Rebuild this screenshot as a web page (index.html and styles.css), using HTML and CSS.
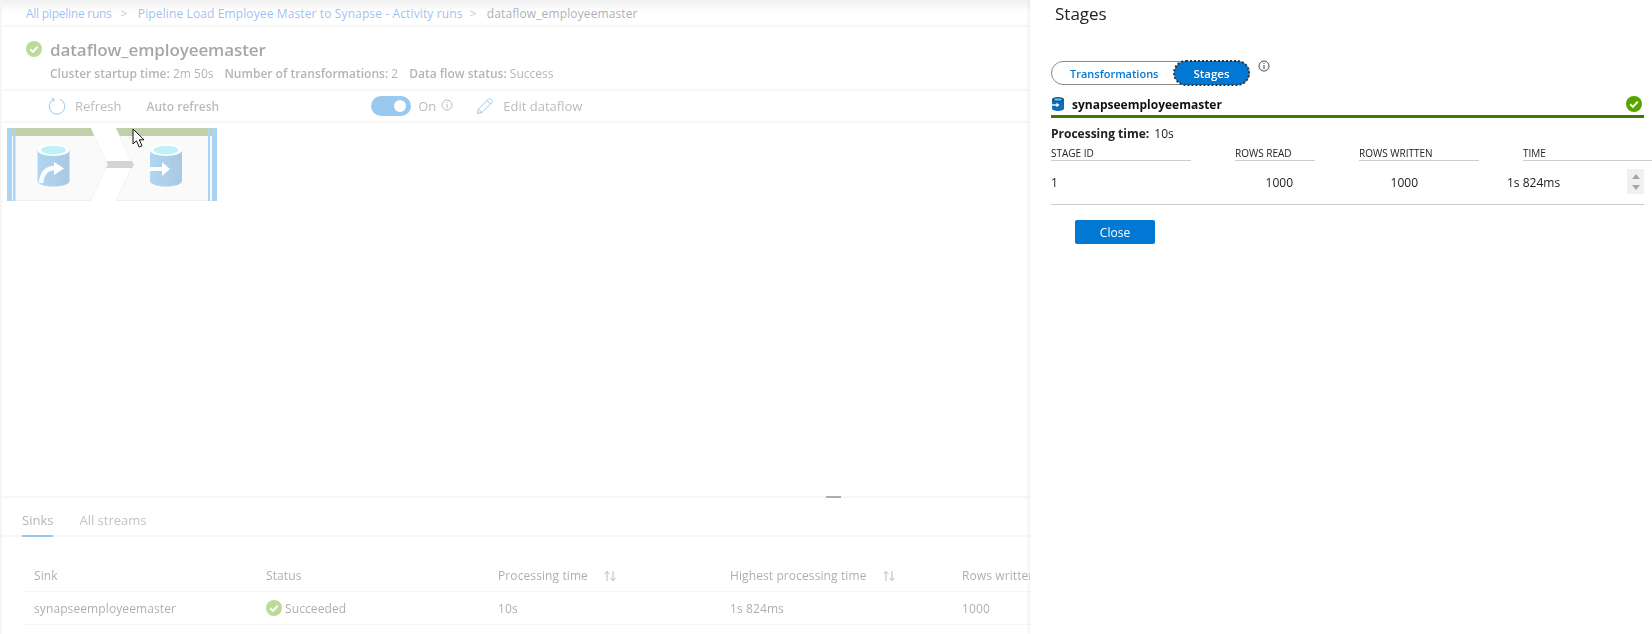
FILE: index.html
```html
<!DOCTYPE html>
<html lang="en">
<head>
    <meta charset="UTF-8">
    <meta name="viewport" content="width=device-width, initial-scale=1.0">
    <title>Stages</title>
    <link rel="stylesheet" href="styles.css">
</head>
<body>
<div class="page">
    <div class="main">
        <div class="faded">
            <div class="breadcrumb">
                <a class="crumb-first">All pipeline runs</a><span class="sep">&gt;</span>
                <a>Pipeline Load Employee Master to Synapse - Activity runs</a><span class="sep">&gt;</span>
                <span>dataflow_employeemaster</span>
            </div>
            <div class="summary">
                <div class="summary-title">
                    <svg class="check-big" viewBox="0 0 16 16"><circle cx="8" cy="8" r="8" fill="#57a300"/><path d="M4.2 8.2l2.7 2.7 4.9-5.3" fill="none" stroke="#fff" stroke-width="2"/></svg>
                    <h1>dataflow_employeemaster</h1>
                </div>
                <div class="summary-meta">
                    <span><b>Cluster startup time:</b> 2m 50s</span>
                    <span><b>Number of transformations:</b> 2</span>
                    <span><b>Data flow status:</b> Success</span>
                </div>
            </div>
            <div class="toolbar">
                <svg class="tool-icon" viewBox="0 0 18 18"><path d="M6 2.2A7.8 7.8 0 1 0 12 2.2M6 2.2L3.6 1M6 2.2L5.6 4.8" fill="none" stroke="#0078d4" stroke-width="1"/></svg>
                <span class="tool-refresh">Refresh</span>
                <span class="tool-auto">Auto refresh</span>
                <span class="switch"><i></i></span>
                <span class="switch-label">On</span>
                <svg class="info-small" viewBox="0 0 12 12"><circle cx="6" cy="6" r="5" fill="none" stroke="#555"/><path d="M6 5v4M6 3v1" stroke="#555"/></svg>
                <svg class="tool-pencil" viewBox="0 0 18 18"><path d="M1.5 16.5l1-4.5L12.500 2a1.500 1.500 0 0 1 2.100 0l1.400 1.400a1.500 1.500 0 0 1 0 2.100L6 15.500zM2.500 12L6 15.500M11 3.500L14.500 7" fill="none" stroke="#0078d4"/></svg>
                <span class="tool-edit">Edit dataflow</span>
            </div>
            <div class="canvas">
                <svg class="flow" width="212" height="76" viewBox="7 128 212 76">
                    <defs>
                        <linearGradient id="cyl" x1="0" x2="1" y1="0" y2="0"><stop offset="0" stop-color="#3999e0"/><stop offset="1" stop-color="#2a78b8"/></linearGradient>
                    </defs>
                    <path d="M7.500 128.500H91L107 164.500 91 200.500H7.500z" fill="#f3f3f3" stroke="#ddd"/>
                    <path d="M116 128.500H216.500V200.500H116L133 164.500z" fill="#f3f3f3" stroke="#ddd"/>
                    <path d="M7 128H91L94 136H7z" fill="#5f8a2c"/>
                    <path d="M116 128H217V136H120z" fill="#5f8a2c"/>
                    <path d="M7 128h5v73H7zM13 128h2.500v73H13z" fill="#2f92e0"/>
                    <path d="M208 128h2v73h-2zM212 128h5v73h-5z" fill="#2f92e0"/>
                    <path d="M106 161H132L134 164.500 132 168H106L108 164.500z" fill="#959595"/>
                    <g>
                        <path d="M37.500 150V181C37.500 184 44 186.500 53.500 186.500S69.500 184 69.500 181V150z" fill="url(#cyl)"/>
                        <ellipse cx="53.500" cy="150" rx="16" ry="6" fill="#fff"/>
                        <ellipse cx="53.500" cy="150" rx="12.500" ry="4.200" fill="#5fdcf0"/>
                        <path d="M41 183C42 173 47 168 55 168" fill="none" stroke="#fff" stroke-width="4.500"/>
                        <path d="M54 162L64 168.500 54 175z" fill="#fff"/>
                    </g>
                    <g>
                        <path d="M150 150V181C150 184 156.500 186.500 166 186.500S182 184 182 181V150z" fill="url(#cyl)"/>
                        <ellipse cx="166" cy="150" rx="16" ry="6" fill="#fff"/>
                        <ellipse cx="166" cy="150" rx="12.500" ry="4.200" fill="#5fdcf0"/>
                        <path d="M150 169H163" stroke="#fff" stroke-width="4"/>
                        <path d="M162 162L170 169 162 176z" fill="#fff"/>
                    </g>
                </svg>
            </div>
            <div class="results">
                <div class="grabber"></div>
                <div class="tabs">
                    <span class="tab tab-active">Sinks</span>
                    <span class="tab">All streams</span>
                </div>
                <div class="sink-table">
                    <div class="sink-row sink-head">
                        <span>Sink</span>
                        <span>Status</span>
                        <span>Processing time <svg class="sort" viewBox="0 0 14 12"><path d="M4 11V1.500M1.500 4L4 1.500 6.500 4M10 1v9.500M7.500 8L10 10.500 12.500 8" fill="none" stroke="#555"/></svg></span>
                        <span>Highest processing time <svg class="sort" viewBox="0 0 14 12"><path d="M4 11V1.500M1.500 4L4 1.500 6.500 4M10 1v9.500M7.500 8L10 10.500 12.500 8" fill="none" stroke="#555"/></svg></span>
                        <span>Rows written</span>
                    </div>
                    <div class="sink-row">
                        <span>synapseemployeemaster</span>
                        <span class="status">
                            <svg class="check-row" viewBox="0 0 16 16"><circle cx="8" cy="8" r="8" fill="#57a300"/><path d="M4.200 8.200l2.700 2.700 4.900-5.300" fill="none" stroke="#fff" stroke-width="2"/></svg>
                            Succeeded
                        </span>
                        <span>10s</span>
                        <span>1s 824ms</span>
                        <span>1000</span>
                    </div>
                </div>
            </div>
        </div>
        <svg class="cursor" width="14" height="21" viewBox="0 0 14 21"><path d="M1 1V16L4.500 12.800 7.200 19 10 17.800 7.300 11.800H12z" fill="#fff" stroke="#111" stroke-width="1"/></svg>
    </div>

    <aside class="blade">
        <h2>Stages</h2>
        <div class="view-switch">
            <div class="segments">
                <span class="seg">Transformations</span>
                <span class="seg seg-on">Stages</span>
            </div>
            <svg class="info" viewBox="0 0 12 12"><circle cx="6" cy="6" r="5" fill="none" stroke="#444"/><path d="M6 5v4M6 3v1" stroke="#444"/></svg>
        </div>
        <div class="sink-name">
            <svg class="sink-icon" viewBox="0 0 12 14"><path d="M0 2.500V11.500C0 13 3 14 6 14S12 13 12 11.500V2.500z" fill="#0f6cbd"/><ellipse cx="6" cy="2.500" rx="6" ry="2.500" fill="#0a4f8c"/><ellipse cx="6" cy="2.500" rx="4" ry="1.300" fill="#4fc3e8"/><path d="M0 8h5" stroke="#fff" stroke-width="1.400"/><path d="M4.500 5.800L7.500 8 4.500 10.200z" fill="#fff"/></svg>
            <strong>synapseemployeemaster</strong>
            <svg class="check-ok" viewBox="0 0 16 16"><circle cx="8" cy="8" r="8" fill="#57a300"/><path d="M4.200 8.200l2.700 2.700 4.900-5.300" fill="none" stroke="#fff" stroke-width="2"/></svg>
        </div>
        <div class="processing"><b>Processing time:</b> 10s</div>
        <div class="stage-table">
            <div class="stage-head">
                <span>STAGE ID</span>
                <span>ROWS READ</span>
                <span>ROWS WRITTEN</span>
                <span>TIME</span>
            </div>
            <div class="stage-row">
                <span>1</span>
                <span class="num">1000</span>
                <span class="num num-wide">1000</span>
                <span class="time">1s 824ms</span>
                <span class="spinner"><i class="up"></i><i class="down"></i></span>
            </div>
        </div>
        <button class="close-btn">Close</button>
    </aside>
</div>
</body>
</html>
```

FILE: styles.css
```css
/* Dimmed monitor page with the stages blade on top */
* {
    box-sizing: border-box;
}

body {
    margin: 0;
    background-color: #fff;
    font-family: "Open Sans", "Noto Sans", sans-serif;
    color: #333;
    overflow: hidden;
}

.page {
    display: flex;
    height: 634px;
}

.main {
    position: relative;
    width: 1030px;
    flex-shrink: 0;
    overflow: hidden;
}

.faded {
    opacity: 0.4;
    height: 634px;
    border-left: 2px solid #e6e6e6;
}

.breadcrumb {
    height: 27px;
    padding: 5px 0 0 24px;
    font-size: 12px;
    line-height: 18px;
    letter-spacing: 0.12px;
    border-bottom: 2px solid #ececec;
    background: linear-gradient(#dcdcdc, #fff 12px);
    white-space: nowrap;
}

.breadcrumb a {
    color: #0a5fd8;
}

.breadcrumb .crumb-first {
    margin-right: 2px;
    letter-spacing: -0.25px;
}

.breadcrumb .sep {
    margin: 0 7px;
    color: #777;
}

.summary {
    height: 64px;
    padding: 8px 0 0 24px;
    border-bottom: 2px solid #ececec;
}

.summary-title {
    display: flex;
    align-items: center;
    height: 28px;
}

.check-big {
    width: 16px;
    height: 16px;
    margin-right: 8px;
}

.summary-title h1 {
    margin: 0;
    font-size: 17px;
    font-weight: 600;
    letter-spacing: -0.1px;
    color: #222;
}

.summary-meta {
    display: flex;
    gap: 11px;
    padding: 3px 0 0 24px;
    font-size: 12px;
    line-height: 16px;
    color: #444;
}

.summary-meta b {
    font-weight: 600;
}

.toolbar {
    display: flex;
    align-items: center;
    height: 32px;
    padding-left: 46px;
    font-size: 13px;
    color: #555;
    border-bottom: 2px solid #ececec;
}

.tool-icon {
    width: 18px;
    height: 18px;
    margin-right: 9px;
}

.tool-refresh {
    margin-right: 25px;
}

.tool-auto {
    margin-right: 152px;
    font-weight: 600;
    font-size: 12px;
}

.switch {
    display: flex;
    justify-content: flex-end;
    align-items: center;
    width: 40px;
    height: 20px;
    padding-right: 5px;
    border-radius: 10px;
    background-color: #0078d4;
}

.switch i {
    width: 12px;
    height: 12px;
    border-radius: 50%;
    background-color: #fff;
}

.switch-label {
    margin-left: 7px;
}

.info-small {
    width: 12px;
    height: 12px;
    margin: 0 0 3px 5px;
}

.tool-pencil {
    width: 18px;
    height: 18px;
    margin: 0 9px 0 23px;
}

.canvas {
    height: 373px;
    padding: 5px 0 0 5px;
}

.flow {
    display: block;
}

.cursor {
    position: absolute;
    left: 132px;
    top: 128px;
}

.results {
    position: relative;
    border-top: 2px solid #ececec;
}

.grabber {
    position: absolute;
    left: 824px;
    top: -2px;
    width: 15px;
    height: 2px;
    background-color: #333;
}

.tabs {
    display: flex;
    gap: 26px;
    height: 39px;
    padding: 12px 0 0 20px;
    font-size: 13px;
    line-height: 20px;
    border-bottom: 2px solid #ececec;
}

.tab {
    height: 27px;
    color: #666;
}

.tab-active {
    color: #444;
    border-bottom: 2px solid #0078d4;
}

.sink-table {
    margin: 22px 0 0 20px;
}

.sink-row {
    display: grid;
    grid-template-columns: 232px 232px 232px 232px 232px;
    align-items: center;
    height: 33px;
    padding-left: 12px;
    font-size: 12px;
    letter-spacing: 0.1px;
    white-space: nowrap;
    border-bottom: 1px solid #e6e6e6;
}

.sort {
    width: 14px;
    height: 12px;
    margin-left: 12px;
    vertical-align: -2px;
}

.status {
    display: flex;
    align-items: center;
    gap: 3px;
}

.check-row {
    width: 16px;
    height: 16px;
}

.blade {
    position: relative;
    width: 622px;
    padding: 0 8px 0 21px;
    background-color: #fff;
    box-shadow: -1px 0 4px rgba(0, 0, 0, 0.08);
}

.blade h2 {
    margin: 0;
    padding: 2px 0 0 4px;
    height: 61px;
    font-size: 17px;
    line-height: 24px;
    font-weight: 400;
    color: #222;
}

.view-switch {
    display: flex;
    height: 28px;
}

.segments {
    display: flex;
    align-items: center;
    justify-content: space-between;
    width: 199px;
    height: 24px;
    border: 1px solid #8a8a8a;
    border-radius: 12px;
    font-size: 11px;
    font-weight: 600;
}

.seg {
    padding-left: 18px;
    color: #0078d4;
}

.seg-on {
    width: 75px;
    height: 24px;
    padding: 0;
    font-size: 11.500px;
    line-height: 25px;
    text-align: center;
    color: #fff;
    background-color: #0078d4;
    border-radius: 12px;
    outline: 2px dotted #333;
    outline-offset: -1px;
}

.info {
    width: 12px;
    height: 12px;
    margin: -1px 0 0 8px;
}

.sink-name {
    display: flex;
    align-items: center;
    height: 29px;
    padding: 4px 0 0 1px;
    border-bottom: 3px solid #3f7a00;
    font-size: 12px;
}

.sink-icon {
    width: 12px;
    height: 14px;
    margin-right: 8px;
}

.sink-name strong {
    flex: 1;
    font-weight: 700;
    color: #111;
}

.check-ok {
    width: 16px;
    height: 16px;
    margin-right: 2px;
}

.processing {
    padding-top: 7px;
    font-size: 12px;
    line-height: 18px;
    color: #222;
}

.processing b {
    margin-right: 2px;
    font-weight: 700;
}

.stage-head,
.stage-row {
    display: grid;
    grid-template-columns: 140px 80px 120px 165px;
    column-gap: 44px;
}

.stage-head {
    margin-top: 3px;
    font-size: 10px;
    line-height: 14px;
    color: #222;
}

.stage-head span {
    height: 15px;
    border-bottom: 1px solid #ccc;
}

.stage-row {
    position: relative;
    align-items: center;
    height: 44px;
    font-size: 12px;
    color: #222;
    border-bottom: 1px solid #ccc;
}

.num {
    text-align: right;
    padding-right: 22px;
}

.num-wide {
    padding-right: 61px;
}

.time {
    margin-left: -16px;
}

.spinner {
    position: absolute;
    right: 0;
    top: 8px;
    display: flex;
    flex-direction: column;
    align-items: center;
    justify-content: center;
    gap: 6px;
    width: 17px;
    height: 25px;
    background-color: #f0f0f0;
}

.spinner i {
    width: 0;
    height: 0;
    border-left: 4px solid transparent;
    border-right: 4px solid transparent;
}

.spinner .up {
    border-bottom: 5px solid #a6a6a6;
}

.spinner .down {
    border-top: 5px solid #a6a6a6;
}

.close-btn {
    display: block;
    width: 80px;
    height: 24px;
    margin: 15px 0 0 24px;
    padding: 0;
    border: none;
    border-radius: 2px;
    background-color: #0078d4;
    color: #fff;
    font-family: inherit;
    font-size: 12px;
}
```
